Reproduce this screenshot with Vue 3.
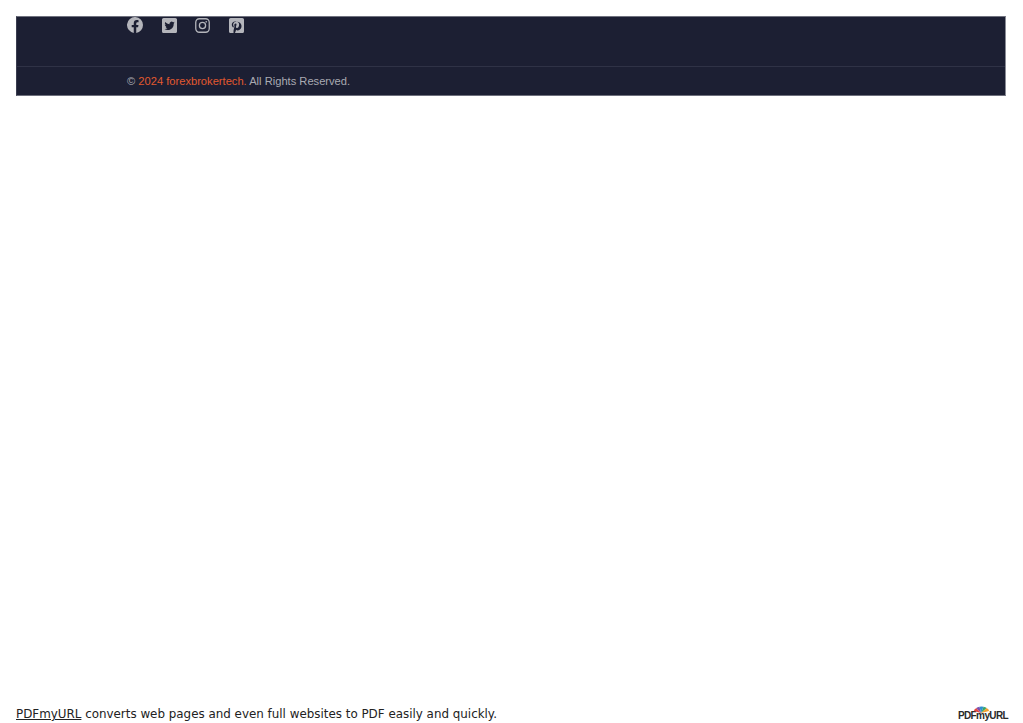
<script setup>
const fan = [
  { c: '#e8483f', d: 'M975 714 L966 711 A10 10 0 0 1 969 707 Z' },
  { c: '#7a4fb0', d: 'M975 714 L969 707 A10 10 0 0 1 973 705 Z' },
  { c: '#2f8fd0', d: 'M975 714 L973 705 A10 10 0 0 1 978 705 Z' },
  { c: '#35a56a', d: 'M975 714 L978 705 A10 10 0 0 1 982 707 Z' },
  { c: '#f0a030', d: 'M975 714 L982 707 A10 10 0 0 1 985 711 Z' }
]
</script>

<template>
  <div class="page">
    <footer class="panel">
      <div class="top">
        <div class="social">
          <svg class="icon round" viewBox="0 0 16 16" aria-label="Facebook">
            <path fill="#b4b5bb" d="M16 8a8 8 0 1 0-9.250 7.900v-5.600H4.700V8h2.050V6.200c0-2 1.200-3.100 3-3.100.9 0 1.800.15 1.800.15v2h-1c-1 0-1.300.6-1.300 1.250V8h2.200l-.35 2.300H9.250v5.600A8 8 0 0 0 16 8z"/>
          </svg>
          <svg class="icon" viewBox="0 1 14 14" aria-label="Twitter">
            <path fill="#b4b5bb" fill-rule="evenodd" d="M1.500 1h11c.8 0 1.500.7 1.500 1.500v11c0 .8-.7 1.500-1.500 1.500h-11C.7 15 0 14.300 0 13.500v-11C0 1.700.7 1 1.500 1zM11.800 5.300c-.35.2-.7.3-1.100.35.4-.25.7-.65.85-1.100-.4.2-.8.4-1.200.5a1.950 1.950 0 0 0-3.350 1.750A5.500 5.500 0 0 1 2.950 4.750a1.950 1.950 0 0 0 .6 2.600c-.3 0-.6-.1-.9-.25 0 .95.650 1.750 1.550 1.900-.3.100-.6.100-.9.050.25.800 1 1.350 1.850 1.350A3.950 3.950 0 0 1 2.300 11.200 5.550 5.550 0 0 0 10.900 6.300c.35-.3.650-.6.900-1z"/>
          </svg>
          <svg class="icon" viewBox="0 1 14 14" fill="none" stroke="#b4b5bb" aria-label="Instagram">
            <rect x=".7" y="1.700" width="12.600" height="12.600" rx="3.400" stroke-width="1.200"/>
            <circle cx="7" cy="8" r="2.900" stroke-width="1.200"/>
            <circle cx="10.500" cy="4.500" r=".8" fill="#b4b5bb" stroke="none"/>
          </svg>
          <svg class="icon" viewBox="0 1 14 14" aria-label="Pinterest">
            <path fill="#b4b5bb" fill-rule="evenodd" d="M1.500 1h11c.8 0 1.500.7 1.500 1.500v11c0 .8-.7 1.500-1.500 1.500H5.500c.35-.6.800-1.600 1.100-3.100.3.450.9.750 1.600.75 2 0 3.500-1.800 3.500-4.100 0-2.300-1.800-4.100-4.500-4.100C4.400 3.450 2.600 5.300 2.600 7.300c0 1 .5 2.150 1.400 2.500.15.100.25 0 .25-.15l.2-.6c0-.1 0-.2-.1-.3-.35-.4-.5-.9-.5-1.400 0-1.550 1.150-2.750 3-2.750 1.650 0 2.600 1 2.600 2.400 0 1.800-.8 3.250-2 3.250-.6 0-1.100-.5-.95-1.100.15-.75.500-1.550.500-2.100 0-.5-.25-.95-.85-.95-.7 0-1.200.7-1.200 1.650 0 .6.200 1 .2 1l-.85 3.600c-.15.700-.1 1.700-.05 2.750H1.500c-.8 0-1.500-.7-1.500-1.500v-11C0 1.700.7 1 1.500 1z"/>
          </svg>
        </div>
      </div>
      <div class="bottom">
        <p class="copy">© <span class="accent">2024 forexbrokertech.</span> All Rights Reserved.</p>
      </div>
    </footer>

    <div class="bar">
      <p class="note"><a class="link" href="#">PDFmyURL</a> converts web pages and even full websites to PDF easily and quickly.</p>
      <div class="logo">
        <svg class="fan" viewBox="965 704 21 10" preserveAspectRatio="none" aria-hidden="true">
          <path v-for="s in fan" :key="s.c" :d="s.d" :fill="s.c"/>
        </svg>
        <span class="brand">PDFmyURL</span>
      </div>
    </div>
  </div>
</template>

<style scoped>
.page {
  height: 723px;
  box-sizing: border-box;
  padding: 16px 17px 0 16px;
  display: flex;
  flex-direction: column;
  justify-content: space-between;
  overflow: hidden;
  background: #fff;
}
.panel {
  height: 80px;
  box-sizing: border-box;
  background: #1c1f33;
  border-right: 1px solid #8a8c96;
  border-bottom: 1px solid #6d6f7c;
  border-top: 1px solid #70727f;
  border-left: 1px solid #3a3d4f;
  display: flex;
  flex-direction: column;
}
.top {
  height: 50px;
  box-sizing: border-box;
  padding-left: 110px;
  border-bottom: 1px solid #2f3246;
}
.social {
  display: flex;
  align-items: center;
  gap: 18.700px;
}
.icon {
  width: 15px;
  height: 15px;
  display: block;
}
.round {
  width: 16px;
  height: 16px;
}
.bottom {
  flex: 1;
  padding-left: 110px;
  display: flex;
  align-items: center;
}
.copy {
  margin: 0;
  font: 11.150px/14px "Liberation Sans", Arial, sans-serif;
  color: #a9aab2;
}
.accent {
  color: #e2592f;
}
.bar {
  display: flex;
  justify-content: space-between;
  align-items: flex-end;
  height: 22px;
  margin-right: -3px;
}
.note {
  margin: 0 0 1px;
  font: 11.900px/15px "DejaVu Sans", Verdana, sans-serif;
  color: #222;
  white-space: nowrap;
}
.link {
  color: #222;
  text-decoration: underline;
}
.logo {
  position: relative;
  width: 52px;
  height: 22px;
  display: flex;
  justify-content: center;
  align-items: flex-end;
}
.fan {
  position: absolute;
  top: 5px;
  left: 16px;
  width: 17px;
  height: 7px;
}
.brand {
  font: 700 10px/10px "Liberation Sans", Arial, sans-serif;
  letter-spacing: -0.6px;
  color: #2a2a2a;
  white-space: nowrap;
  margin-bottom: 2px;
}
</style>
